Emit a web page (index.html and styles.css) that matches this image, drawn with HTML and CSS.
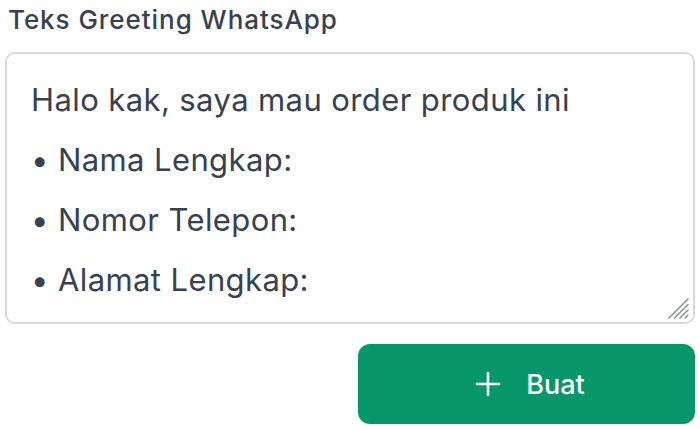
FILE: index.html
```html
<!DOCTYPE html>
<html lang="id">
<head>
    <meta charset="UTF-8">
    <meta name="viewport" content="width=device-width, initial-scale=1.0">
    <title>Teks Greeting WhatsApp</title>
    <link rel="stylesheet" href="styles.css">
</head>
<body>
    <div class="greeting-form">
        <label class="field-label" for="greeting">Teks Greeting WhatsApp</label>
        <div class="field-wrap">
            <textarea class="field-input" id="greeting" rows="4">Halo kak, saya mau order produk ini
• Nama Lengkap:
• Nomor Telepon:
• Alamat Lengkap:</textarea>
            <!-- resize grip drawn over the corner -->
            <svg class="resize-grip" viewBox="0 0 24 24" width="24" height="24" stroke="#8f9296" stroke-width="1.6" stroke-linecap="round">
                <path d="M22 3L3 22M22 8.5L8.5 22M22 14L14 22M22 19L19 22"/>
            </svg>
        </div>
        <div class="form-actions">
            <button class="create-btn" type="button">
                <svg class="create-icon" viewBox="0 0 24 24" width="28" height="28" fill="none" stroke="currentColor" stroke-width="2.2" stroke-linecap="round">
                    <path d="M12 2.5v19M2.5 12h19"/>
                </svg>
                <span>Buat</span>
            </button>
        </div>
    </div>
</body>
</html>
```

FILE: styles.css
```css
body {
    margin: 0;
    padding: 0;
    background-color: #fff;
    font-family: Inter, "Noto Sans", sans-serif;
}

.greeting-form {
    width: 690px;
    padding: 4px 5px 0;
    display: flex;
    flex-direction: column;
}

.field-label {
    font-size: 26px;
    font-weight: 500;
    letter-spacing: 0.95px;
    color: #374151;
    line-height: 32px;
    padding-left: 3px;
    margin-bottom: 16px;
}

.field-wrap {
    position: relative;
}

.field-input {
    display: block;
    box-sizing: border-box;
    width: 690px;
    height: 272px;
    padding: 16px 24px;
    border: 2px solid #d6d8dc;
    border-radius: 10px;
    font-family: Inter, "Noto Sans", sans-serif;
    font-size: 31px;
    letter-spacing: 0.4px;
    line-height: 60px;
    color: #374151;
    background-color: #fff;
    resize: none;
    outline: none;
}

.resize-grip {
    position: absolute;
    right: 5px;
    bottom: 4px;
}

.form-actions {
    display: flex;
    justify-content: flex-end;
    margin-top: 20px;
}

.create-btn {
    width: 337px;
    height: 80px;
    display: flex;
    align-items: center;
    justify-content: center;
    gap: 24px;
    padding: 0 0 0 6px;
    border: none;
    border-radius: 12px;
    background-color: #069669;
    color: #fff;
    font-family: Inter, "Noto Sans", sans-serif;
    font-size: 27px;
    font-weight: 500;
    cursor: pointer;
}

.create-icon {
    display: block;
}
```
